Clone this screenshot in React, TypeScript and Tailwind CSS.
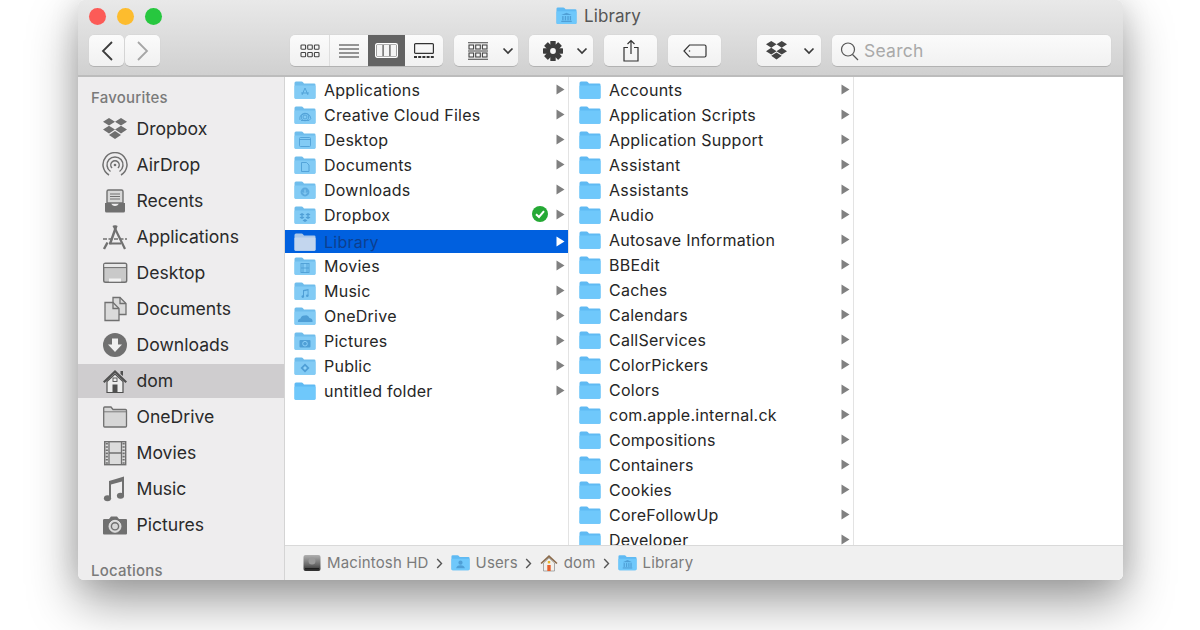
import React from "react";

const G = "#4f9fd6";

function Glyph({ k }: { k: string }) {
  const p = { fill: "none", stroke: G, strokeWidth: 0.9 };
  switch (k) {
    case "apps":
      return <g {...p}><path d="M8 15 L11 8 L14 15 M7 13 H15" /></g>;
    case "cc":
      return <g {...p}><circle cx="11" cy="12" r="2" /><circle cx="11" cy="12" r="3.8" /><path d="M6 15 Q5 10 9.5 9 Q14 7.5 16 11 Q18 14 15 15.5 H7" /></g>;
    case "desk":
      return <g {...p}><rect x="5.5" y="7.5" width="11" height="9" rx="1" /><path d="M5.5 9.5 H16.5" /></g>;
    case "docs":
      return <g {...p}><path d="M7.5 7.5 H12.5 L15 10 V16.5 H7.5 Z" /></g>;
    case "down":
      return <g><circle cx="11" cy="12" r="4.4" fill={G} opacity="0.75" /><path d="M11 9.5 V14 M9 12.5 L11 14.5 L13 12.5" fill="none" stroke="#8fd3fa" strokeWidth="1" /></g>;
    case "drop":
      return <g fill={G}><path d="M8 8 L10.5 9.5 L8 11 L5.5 9.5 Z M14 8 L16.5 9.5 L14 11 L11.5 9.5 Z M8 11 L10.5 12.5 L8 14 L5.5 12.5 Z M14 11 L16.5 12.5 L14 14 L11.5 12.5 Z M11 14 L13.5 15.5 L11 17 L8.5 15.5 Z" /></g>;
    case "lib":
      return <g fill={G}><path d="M11 7 L16.5 9.5 H5.5 Z" /><rect x="6.5" y="10.5" width="1.4" height="4.5" /><rect x="9.2" y="10.5" width="1.4" height="4.5" /><rect x="11.9" y="10.5" width="1.4" height="4.5" /><rect x="14.4" y="10.5" width="1.4" height="4.5" /><rect x="5.5" y="15.5" width="11" height="1.3" /></g>;
    case "mov":
      return <g {...p}><rect x="7" y="7.5" width="8" height="9" /><path d="M7 12 H15 M9 7.5 V16.5 M13 7.5 V16.5" /></g>;
    case "mus":
      return <g fill={G}><path d="M9 9 L14.5 8 V14.5 H13.6 V9.6 L10 10.3 V15.5 H9 Z" /><circle cx="8.8" cy="15.6" r="1.3" /><circle cx="13.3" cy="14.7" r="1.3" /></g>;
    case "one":
      return <g fill={G}><path d="M4 16 Q3.5 13 6.5 12.5 Q7.5 9 11 9.5 Q14 8.5 15.5 12 Q19 12.5 18.5 16 Z" /></g>;
    case "pic":
      return <g><rect x="5.5" y="9" width="11" height="7.5" rx="1" fill={G} /><circle cx="11" cy="12.7" r="2.3" fill="none" stroke="#8fd3fa" strokeWidth="0.9" /></g>;
    case "pub":
      return <g fill={G}><path d="M11 7.5 L15.5 12 L11 16.5 L6.5 12 Z" /><path d="M11 10 L13 12 L11 14 L9 12 Z" fill="#8fd3fa" /></g>;
    case "usr":
      return <g fill={G}><circle cx="11" cy="10" r="2.4" /><path d="M6 16.5 Q6.5 13 11 13 Q15.5 13 16 16.5 Z" /></g>;
    default:
      return null;
  }
}

function Folder({ k, pale, w = 22, selected }: { k?: string; pale?: boolean; w?: number; selected?: boolean }) {
  const back = selected ? "#a9c6e8" : pale ? "#6fbdec" : "#5fbaf3";
  const front = selected ? "#c3d6ee" : pale ? "#82cbf5" : "#6fc8fb";
  return (
    <svg width={w} height={(w * 20) / 22} viewBox="0 0 22 20" className="shrink-0">
      <path d="M0.5 3 Q0.5 1.5 2 1.5 H7.5 Q8.5 1.5 9.2 2.4 L10 3.5 H20.2 Q21.5 3.5 21.5 4.8 V17.5 Q21.5 18.8 20.2 18.8 H1.8 Q0.5 18.8 0.5 17.5 Z" fill={back} />
      <path d="M0.5 6.5 Q0.5 5.5 1.5 5.5 H20.5 Q21.5 5.5 21.5 6.5 V17.5 Q21.5 18.8 20.2 18.8 H1.8 Q0.5 18.8 0.5 17.5 Z" fill={front} />
      {k && !selected && <Glyph k={k} />}
    </svg>
  );
}

function Tri({ white }: { white?: boolean }) {
  return (
    <svg width="9" height="11" viewBox="0 0 9 11" className="shrink-0">
      <path d="M0.5 0.5 L8.5 5.5 L0.5 10.5 Z" fill={white ? "#ffffff" : "#808080"} />
    </svg>
  );
}

function Chev({ color = "#3a3a3a" }: { color?: string }) {
  return (
    <svg width="12" height="8" viewBox="0 0 12 8">
      <path d="M1.5 1.5 L6 6 L10.5 1.5" fill="none" stroke={color} strokeWidth="1.7" />
    </svg>
  );
}

function DropboxMark({ w = 24, color = "#6f6f6f" }: { w?: number; color?: string }) {
  return (
    <svg width={w} height={(w * 22) / 24} viewBox="0 0 24 22">
      <path fill={color} d="M6 0 L12 3.8 L6 7.6 L0 3.8 Z M18 0 L24 3.8 L18 7.6 L12 3.8 Z M6 7.8 L12 11.6 L6 15.4 L0 11.6 Z M18 7.8 L24 11.6 L18 15.4 L12 11.6 Z M12 13 L18 16.9 L12 21 L6 16.9 Z" />
    </svg>
  );
}

const GR = "#707070";

function SideIcon({ k }: { k: string }) {
  const s = { width: 26, height: 26, viewBox: "0 0 26 26" };
  switch (k) {
    case "dropbox":
      return <span className="flex w-[26px] justify-center"><DropboxMark /></span>;
    case "airdrop":
      return (
        <svg {...s} fill="none" stroke={GR}>
          <path d="M7 23 A12 12 0 1 1 19 23" strokeWidth="1.5" />
          <path d="M8.5 19.5 A8 8 0 1 1 17.5 19.5" strokeWidth="1.5" />
          <path d="M10 16 A4.2 4.2 0 1 1 16 16" strokeWidth="1.5" />
          <circle cx="13" cy="13" r="1.3" fill={GR} stroke="none" />
        </svg>
      );
    case "recents":
      return (
        <svg {...s}>
          <path d="M5 3.5 Q5 2 6.5 2 H19.5 Q21 2 21 3.5 V15 H5 Z" fill="#d8d8d8" stroke={GR} strokeWidth="1.4" />
          <path d="M8 6 H18 M8 8.5 H18 M8 11 H18" stroke={GR} strokeWidth="1.2" />
          <path d="M3 15 H9 Q10 18 13 18 Q16 18 17 15 H23 V23 Q23 24.5 21.5 24.5 H4.5 Q3 24.5 3 23 Z" fill={GR} />
        </svg>
      );
    case "applications":
      return (
        <svg {...s} fill="none" stroke={GR} strokeWidth="2.4">
          <path d="M8 20 L14.5 1.5" />
          <path d="M11.5 1.5 L23 25" strokeWidth="2.2" />
          <path d="M1 15 H25" strokeDasharray="4 1.5" strokeWidth="1.6" />
          <path d="M5.5 18.5 L2 25" />
          <path d="M7 19.5 H19" strokeWidth="2" />
        </svg>
      );
    case "desktop":
      return (
        <svg {...s}>
          <rect x="1.7" y="3.2" width="23" height="19" rx="1.8" fill="#c9c9c9" stroke={GR} strokeWidth="1.4" />
          <rect x="2.4" y="4" width="21.2" height="3.2" fill="#e8e8e8" />
          <path d="M2 7.6 H24" stroke={GR} strokeWidth="1" />
          <rect x="7" y="18.5" width="12" height="3" fill="#f2f2f2" />
        </svg>
      );
    case "documents":
      return (
        <svg {...s}>
          <path d="M11 1.5 H18 L24 7.5 V18.5 H11 Z" fill="#dadada" stroke={GR} strokeWidth="1.3" />
          <path d="M18 1.5 V7.5 H24" fill="none" stroke={GR} strokeWidth="1.3" />
          <path d="M3 6.5 H11 L17 12.5 V24.5 H3 Z" fill="#dadada" stroke={GR} strokeWidth="1.3" />
          <path d="M11 6.5 V12.5 H17" fill="none" stroke={GR} strokeWidth="1.3" />
        </svg>
      );
    case "downloads":
      return (
        <svg {...s}>
          <circle cx="13" cy="13" r="12" fill={GR} />
          <path d="M10 6.5 H16 V12.5 H20 L13 20 L6 12.5 H10 Z" fill="#f0f0f0" />
        </svg>
      );
    case "home":
      return (
        <svg {...s}>
          <path d="M13 2 L25 13.5 L23.5 15 L13 5 L2.5 15 L1 13.5 Z" fill="#505050" />
          <path d="M18.5 3 H21 V8 L18.5 6 Z" fill="#505050" />
          <path d="M5 13.5 L13 6 L21 13.5 V24.5 H5 Z" fill="#ededed" stroke="#505050" strokeWidth="1.2" />
          <rect x="11" y="10" width="4" height="3.5" fill="none" stroke="#505050" strokeWidth="0.9" />
          <rect x="10.5" y="16.5" width="5" height="8" fill="#505050" />
        </svg>
      );
    case "folder":
      return (
        <svg {...s}>
          <path d="M1.7 4 Q1.7 3 2.7 3 H9 L11 5.5 H23.5 Q24.5 5.5 24.5 6.5 V22 Q24.5 23 23.5 23 H2.7 Q1.7 23 1.7 22 Z" fill="#d6d6d6" stroke={GR} strokeWidth="1.3" />
          <path d="M2 7.8 H24" stroke={GR} strokeWidth="0.9" />
        </svg>
      );
    case "movies":
      return (
        <svg {...s}>
          <rect x="2.7" y="1.7" width="21" height="23" fill="#dcdcdc" stroke={GR} strokeWidth="1.4" />
          <path d="M7 2 V24.5 M19.5 2 V24.5 M7 13 H19.5" stroke={GR} strokeWidth="1.3" />
          <path d="M4.8 3 V24" stroke={GR} strokeWidth="2.2" strokeDasharray="1.6 1.6" />
          <path d="M21.6 3 V24" stroke={GR} strokeWidth="2.2" strokeDasharray="1.6 1.6" />
        </svg>
      );
    case "music":
      return (
        <svg {...s}>
          <path d="M7 5 Q14 3 22 0.5 V19.5 H20 V5.5 L9 8.5 V22.5 H7 Z" fill={GR} />
          <ellipse cx="5.5" cy="22.2" rx="3.6" ry="3" fill={GR} />
          <ellipse cx="18.5" cy="19.7" rx="3.6" ry="3" fill={GR} />
        </svg>
      );
    case "pictures":
      return (
        <svg {...s}>
          <path d="M2.5 7 H7 L9 4.5 H15 L17 7 H24 Q25 7 25 8 V21.5 Q25 22.5 24 22.5 H2 Q1 22.5 1 21.5 V8 Q1 7 2.5 7 Z" fill={GR} />
          <circle cx="13" cy="14.3" r="6" fill="#d6d6d6" stroke="#f0f0f0" strokeWidth="0.8" />
          <circle cx="13" cy="14.3" r="3.6" fill="none" stroke={GR} strokeWidth="1.4" />
        </svg>
      );
    default:
      return null;
  }
}

const sidebar: [string, string][] = [
  ["dropbox", "Dropbox"],
  ["airdrop", "AirDrop"],
  ["recents", "Recents"],
  ["applications", "Applications"],
  ["desktop", "Desktop"],
  ["documents", "Documents"],
  ["downloads", "Downloads"],
  ["home", "dom"],
  ["folder", "OneDrive"],
  ["movies", "Movies"],
  ["music", "Music"],
  ["pictures", "Pictures"],
];

const col1: [string, string][] = [
  ["Applications", "apps"],
  ["Creative Cloud Files", "cc"],
  ["Desktop", "desk"],
  ["Documents", "docs"],
  ["Downloads", "down"],
  ["Dropbox", "drop"],
  ["Library", "lib"],
  ["Movies", "mov"],
  ["Music", "mus"],
  ["OneDrive", "one"],
  ["Pictures", "pic"],
  ["Public", "pub"],
  ["untitled folder", ""],
];

const col2 = [
  "Accounts",
  "Application Scripts",
  "Application Support",
  "Assistant",
  "Assistants",
  "Audio",
  "Autosave Information",
  "BBEdit",
  "Caches",
  "Calendars",
  "CallServices",
  "ColorPickers",
  "Colors",
  "com.apple.internal.ck",
  "Compositions",
  "Containers",
  "Cookies",
  "CoreFollowUp",
  "Developer",
];

const btn =
  "flex h-[31px] items-center justify-center rounded-[5px] bg-gradient-to-b from-[#fbfbfb] to-[#f1f1f1] shadow-[0_1px_0_#b2b2b2,0_0_0_0.5px_#d4d4d4]";

function Toolbar() {
  return (
    <div className="mt-[3px] flex h-[31px] items-center pl-[11px]">
      <div className="flex gap-[1px]">
        <div className={`${btn} w-[35px]`}>
          <svg width="14" height="22" viewBox="0 0 14 22"><path d="M12 2 L3 11 L12 20" fill="none" stroke="#3c3c3c" strokeWidth="1.8" /></svg>
        </div>
        <div className={`${btn} w-[35px]`}>
          <svg width="14" height="22" viewBox="0 0 14 22"><path d="M2 2 L11 11 L2 20" fill="none" stroke="#a6a6a6" strokeWidth="1.8" /></svg>
        </div>
      </div>
      <div className={`${btn} ml-[130px] w-[153px] !justify-start overflow-hidden`}>
        <div className="flex h-full w-[40px] items-center justify-center border-r border-[#dedede] pl-[1px]">
          <svg width="20" height="14" viewBox="0 0 20 14" fill="none" stroke="#444" strokeWidth="1.1">
            <rect x="1" y="1" width="4.6" height="4.2" rx="0.8" /><rect x="7.7" y="1" width="4.6" height="4.2" rx="0.8" /><rect x="14.4" y="1" width="4.6" height="4.2" rx="0.8" />
            <rect x="1" y="8.5" width="4.6" height="4.2" rx="0.8" /><rect x="7.7" y="8.5" width="4.6" height="4.2" rx="0.8" /><rect x="14.4" y="8.5" width="4.6" height="4.2" rx="0.8" />
          </svg>
        </div>
        <div className="flex h-full w-[38px] items-center justify-center">
          <svg width="20" height="14" viewBox="0 0 20 14" stroke="#333" strokeWidth="1.2"><path d="M0 1 H20 M0 5 H20 M0 9 H20 M0 13 H20" /></svg>
        </div>
        <div className="flex h-full w-[37px] items-center justify-center bg-[#636363]">
          <svg width="23" height="15" viewBox="0 0 23 15" fill="none">
            <rect x="0.7" y="0.7" width="21.6" height="13.6" rx="1.5" stroke="#fff" strokeWidth="1.4" />
            <rect x="2" y="2" width="5.4" height="11" fill="#f4f4f4" /><rect x="8.8" y="2" width="5.4" height="11" fill="#f4f4f4" /><rect x="15.6" y="2" width="5.4" height="11" fill="#f4f4f4" />
          </svg>
        </div>
        <div className="flex h-full w-[38px] items-center justify-center">
          <svg width="20" height="15" viewBox="0 0 20 15" fill="none" stroke="#333" strokeWidth="1.2">
            <rect x="0.6" y="0.6" width="18.8" height="9.8" rx="1" />
            <path d="M0 14 H20" strokeWidth="2" strokeDasharray="3 1.2" />
          </svg>
        </div>
      </div>
      <div className={`${btn} ml-[11px] w-[64px] !justify-start gap-[14px] pl-[14px]`}>
        <svg width="20" height="18" viewBox="0 0 20 18" fill="none" stroke="#444" strokeWidth="1.1">
          <path d="M0 0.8 H20 M0 9 H20 M0 17.2 H20" />
          <rect x="1" y="3" width="4.6" height="4" /><rect x="7.7" y="3" width="4.6" height="4" /><rect x="14.4" y="3" width="4.6" height="4" />
          <rect x="1" y="11" width="4.6" height="4" /><rect x="7.7" y="11" width="4.6" height="4" /><rect x="14.4" y="11" width="4.6" height="4" />
        </svg>
        <Chev />
      </div>
      <div className={`${btn} ml-[11px] w-[64px] !justify-start gap-[13px] pl-[14px]`}>
        <svg width="20" height="20" viewBox="0 0 20 20">
          {[0, 45, 90, 135, 180, 225, 270, 315].map((a) => (
            <rect key={a} x="7.3" y="0" width="5.4" height="5" rx="0.6" fill="#3c3c3c" transform={`rotate(${a} 10 10)`} />
          ))}
          <circle cx="10" cy="10" r="4.8" fill="none" stroke="#3c3c3c" strokeWidth="3.8" />
        </svg>
        <Chev />
      </div>
      <div className={`${btn} ml-[11px] w-[53px]`}>
        <svg width="16" height="23" viewBox="0 0 16 23" fill="none" stroke="#333" strokeWidth="1.2">
          <path d="M5 8.5 H1 V22 H15 V8.5 H11" />
          <path d="M8 15 V1.5 M4.5 5 L8 1.5 L11.5 5" />
        </svg>
      </div>
      <div className={`${btn} ml-[11px] w-[53px]`}>
        <svg width="24" height="14" viewBox="0 0 24 14" fill="none" stroke="#333" strokeWidth="1.2">
          <path d="M6.5 1 H21.5 Q23 1 23 2.5 V11.5 Q23 13 21.5 13 H6.5 L1 7 Z" />
          <circle cx="6.5" cy="7" r="0.8" fill="#444" stroke="none" />
        </svg>
      </div>
      <div className={`${btn} ml-[36px] w-[64px] !justify-start gap-[16px] pl-[9px]`}>
        <DropboxMark w={21} color="#444" />
        <Chev />
      </div>
      <div className={`${btn} ml-[11px] w-[279px] !justify-start gap-[5px] pl-[8px]`}>
        <svg width="19" height="20" viewBox="0 0 19 20" fill="none" stroke="#555" strokeWidth="1.2">
          <circle cx="8" cy="8.5" r="6.5" /><path d="M12.5 13.5 L18 19" />
        </svg>
        <span className="mt-[2px] text-[17.5px] tracking-[0.25px] text-[#a9a9a9]">Search</span>
      </div>
    </div>
  );
}

function Row1({ name, k }: { name: string; k: string }) {
  const sel = name === "Library";
  const check = name === "Dropbox";
  return (
    <div className={sel ? "flex h-[26px] items-end" : "flex h-[25px] items-center"}>
      <div className={`flex h-[23px] w-full items-center pl-[9px] pr-[3px] ${sel ? "bg-[#0060df]" : ""}`}>
        <Folder k={k || undefined} pale={!!k} selected={sel} />
        <span className={`ml-[8px] flex-1 truncate ${sel ? "text-[#0d3f8f]" : ""}`}>{name}</span>
        {check && (
          <svg width="16" height="16" viewBox="0 0 16 16" className="mr-[8px] -mt-[2px]">
            <circle cx="8" cy="8" r="8" fill="#25a935" />
            <path d="M4 8.2 L7 11 L12 5.2" fill="none" stroke="#fff" strokeWidth="2" />
          </svg>
        )}
        <Tri white={sel} />
      </div>
    </div>
  );
}

function Crumb({ icon, label }: { icon: React.ReactNode; label: string }) {
  return (
    <div className="flex items-center gap-[6px]">
      {icon}
      <span>{label}</span>
    </div>
  );
}

function Sep() {
  return (
    <svg width="7" height="11" viewBox="0 0 7 11" className="mx-[7.5px]">
      <path d="M1.2 1 L5.5 5.5 L1.2 10" fill="none" stroke="#555" strokeWidth="1.4" />
    </svg>
  );
}

export default function App() {
  return (
    <div
      className="h-[630px] w-[1200px] overflow-hidden bg-white pl-[78px]"
      style={{ fontFamily: "Inter, 'Noto Sans', sans-serif" }}
    >
      <div className="flex h-[580px] w-[1045px] flex-col overflow-hidden rounded-[6px] shadow-[0_22px_50px_rgba(0,0,0,0.38),0_0_30px_rgba(0,0,0,0.12)]">
        <div className="h-[77px] shrink-0 border-b-2 border-[#bcbcbc] bg-gradient-to-b from-[#e9e9e9] to-[#d0d0d0]">
          <div className="flex h-[32px] items-center pl-[11px]">
            <div className="h-[17px] w-[17px] rounded-full bg-[#fc5b57]" />
            <div className="ml-[11px] h-[17px] w-[17px] rounded-full bg-[#fdbc2e]" />
            <div className="ml-[11px] h-[17px] w-[17px] rounded-full bg-[#27c73f]" />
            <div className="ml-[394px]"><Folder k="lib" w={21} /></div>
            <span className="ml-[7px] mt-[1px] text-[17px] tracking-[0.1px] text-[#555555]">Library</span>
          </div>
          <Toolbar />
        </div>
        <div className="flex min-h-0 flex-1">
          <div className="w-[207px] shrink-0 border-r border-[#d4d4d4] bg-[#eeedee]">
            <div className="h-[34px] pl-[13px] pt-[11px] text-[15px] font-medium leading-[20px] tracking-[0.2px] text-[#7a7a7a]">Favourites</div>
            {sidebar.map(([k, label]) => (
              <div key={label} className="flex h-[36px] items-center">
                <div
                  className={`flex h-[34px] w-full items-center gap-[9px] pl-[24px] text-[17.6px] text-[#2a2a2a] ${k === "home" ? "bg-[#cfcdcf]" : ""}`}
                >
                  <SideIcon k={k} />
                  <span className="-ml-[0.5px]">{label}</span>
                </div>
              </div>
            ))}
            <div className="pl-[13px] pt-[18px] text-[15px] font-medium leading-[20px] tracking-[0.2px] text-[#7a7a7a]">Locations</div>
          </div>
          <div className="flex min-w-0 flex-1 flex-col bg-white">
            <div className="flex min-h-0 flex-1 text-[16px] tracking-[0.25px] text-[#262626]">
              <div className="w-[284px] shrink-0 overflow-hidden border-r border-[#e3e3e3]">
                {col1.map(([name, k]) => (
                  <Row1 key={name} name={name} k={k} />
                ))}
              </div>
              <div className="w-[285px] shrink-0 overflow-hidden border-r border-[#e3e3e3]">
                {col2.map((name) => (
                  <div key={name} className="flex h-[25px] shrink-0 items-center pl-[10px] pr-[3px]">
                    <Folder />
                    <span className="ml-[8px] flex-1 truncate">{name}</span>
                    <Tri />
                  </div>
                ))}
              </div>
            </div>
            <div className="flex h-[35px] shrink-0 items-center border-t border-[#d9d9d9] bg-[#f0f0f0] pl-[18px] text-[15px] tracking-[0.15px] text-[#7b7b7b]">
              <Crumb
                label="Macintosh HD"
                icon={
                  <svg width="18" height="18" viewBox="0 0 18 18">
                    <defs>
                      <linearGradient id="hd" x1="0" x2="0" y1="0" y2="1">
                        <stop offset="0" stopColor="#b0b0b0" /><stop offset="0.6" stopColor="#6a6a6a" /><stop offset="1" stopColor="#2e2e2e" />
                      </linearGradient>
                    </defs>
                    <rect x="0.5" y="1" width="17" height="16" rx="2" fill="url(#hd)" />
                    <circle cx="9" cy="7" r="3.5" fill="#9a9a9a" />
                    <rect x="2" y="14" width="14" height="1.5" fill="#1e1e1e" />
                  </svg>
                }
              />
              <Sep />
              <Crumb label="Users" icon={<Folder k="usr" w={19} />} />
              <Sep />
              <Crumb
                label="dom"
                icon={
                  <svg width="18" height="18" viewBox="0 0 18 18">
                    <path d="M9 1 L17.5 9 L16.4 10 L9 3.4 L1.6 10 L0.5 9 Z" fill="#8a6a4a" />
                    <path d="M3.5 9 L9 4 L14.5 9 V17 H3.5 Z" fill="#f2f0ec" stroke="#8a8a8a" strokeWidth="0.7" />
                    <rect x="7.3" y="11" width="3.4" height="6" fill="#e8602c" />
                    <rect x="7.8" y="7" width="2.4" height="2.4" fill="#e8b52c" />
                  </svg>
                }
              />
              <Sep />
              <Crumb label="Library" icon={<Folder k="lib" w={19} />} />
            </div>
          </div>
        </div>
      </div>
    </div>
  );
}
